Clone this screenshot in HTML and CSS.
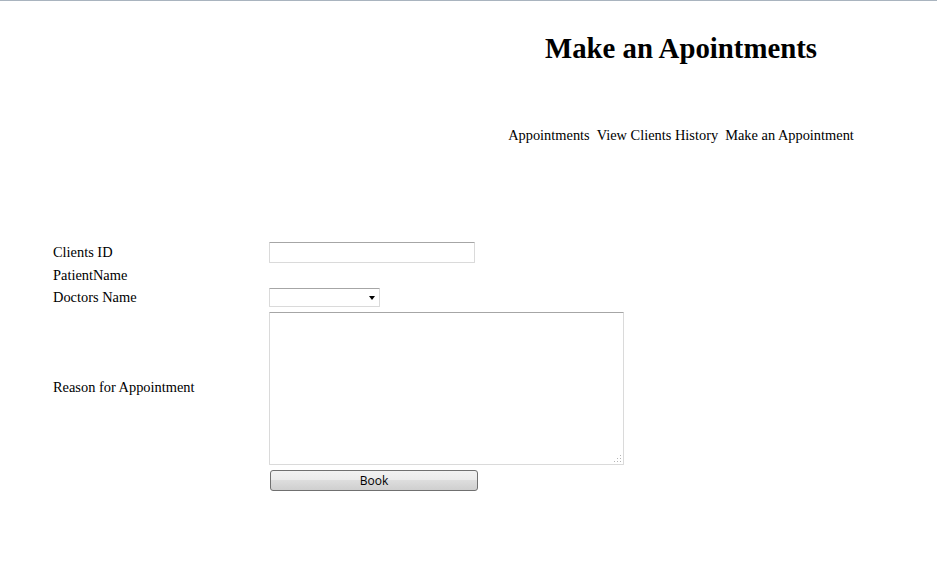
FILE: index.html
```html
<!DOCTYPE html>
<html>
<head>
<meta charset="utf-8">
<title>Make an Apointments</title>
<link rel="stylesheet" href="styles.css">
</head>
<body>
<div class="page">
  <header class="header">
    <h1 class="title">Make an Apointments</h1>
    <nav class="nav">
      <a class="nav-link" href="#">Appointments</a>
      <a class="nav-link" href="#">View Clients History</a>
      <a class="nav-link" href="#">Make an Appointment</a>
    </nav>
  </header>
  <form class="form">
    <label class="label">Clients ID</label>
    <div class="cell"><input class="text-input" type="text"></div>
    <label class="label">PatientName</label>
    <div class="cell"></div>
    <label class="label">Doctors Name</label>
    <div class="cell"><div class="select-wrap"><select class="select"><option></option></select></div></div>
    <label class="label">Reason for Appointment</label>
    <div class="cell"><div class="textarea-wrap"><textarea class="textarea"></textarea></div></div>
    <div class="label"></div>
    <div class="cell"><button class="btn" type="button">Book</button></div>
  </form>
</div>
</body>
</html>
```
FILE: styles.css
```css
html, body {
  margin: 0;
  padding: 0;
  background: #ffffff;
}
body {
  font-family: "Liberation Serif", "Times New Roman", serif;
  font-size: 14.4px;
  color: #000;
}
.page {
  border-top: 1px solid #a9b4bf;
  min-height: 584px;
}
.header {
  margin-left: 425px;
  padding-top: 31px;
  text-align: center;
}
.title {
  margin: 0;
  font-size: 28.8px;
  line-height: 32px;
  font-weight: bold;
}
.nav {
  margin-top: 63px;
  display: flex;
  justify-content: center;
  gap: 7px;
  line-height: 16px;
}
.nav-link {
  color: #000;
  text-decoration: none;
}
.form {
  margin-top: 98px;
  padding-left: 53px;
  display: grid;
  grid-template-columns: 216px auto;
  grid-template-rows: 23px 19px 21px 156px 25px;
  row-gap: 2px;
  line-height: 16px;
}
.label {
  align-self: center;
  white-space: nowrap;
  margin-top: -2px;
}
.cell {
  display: flex;
  align-items: center;
}
.text-input {
  box-sizing: border-box;
  width: 206px;
  height: 21px;
  margin: 0;
  padding: 0 2px;
  border: 1px solid #dadada;
  border-top-color: #a6a6a6;
  border-radius: 1px;
  background: #fff;
  outline: none;
}
.select-wrap {
  position: relative;
  width: 111px;
  height: 19px;
}
.select-wrap::after {
  content: "";
  position: absolute;
  right: 5px;
  top: 8px;
  border-left: 3.5px solid transparent;
  border-right: 3.5px solid transparent;
  border-top: 4px solid #000;
  pointer-events: none;
}
.select {
  -webkit-appearance: none;
  appearance: none;
  box-sizing: border-box;
  width: 111px;
  height: 19px;
  margin: 0;
  padding: 0;
  border: 1px solid #dadada;
  border-top-color: #a6a6a6;
  border-radius: 1px;
  background: #fff;
  outline: none;
}
.textarea-wrap {
  position: relative;
  width: 355px;
  height: 153px;
}
.textarea-wrap::after {
  content: "";
  position: absolute;
  right: 3px;
  bottom: 3px;
  width: 1px;
  height: 1px;
  background: #b4b4b4;
  box-shadow:
    -3px 0 0 #b4b4b4,
    -6px 0 0 #b4b4b4,
    0 -3px 0 #b4b4b4,
    -3px -3px 0 #b4b4b4,
    0 -6px 0 #b4b4b4;
  pointer-events: none;
}
.textarea {
  display: block;
  box-sizing: border-box;
  width: 355px;
  height: 153px;
  margin: 0;
  padding: 2px;
  border: 1px solid #dadada;
  border-top-color: #a6a6a6;
  border-radius: 1px;
  background: #fff;
  outline: none;
  resize: none;
}
.btn {
  box-sizing: border-box;
  width: 208px;
  height: 21px;
  margin: 0 0 0 1px;
  padding: 0;
  border: 1px solid #707070;
  border-radius: 3px;
  background: linear-gradient(to bottom, #f2f2f2 0%, #ebebeb 45%, #dddddd 50%, #cfcfcf 100%);
  font-family: "Open Sans", "DejaVu Sans", sans-serif;
  font-size: 12px;
  line-height: 19px;
  color: #000;
}
```
